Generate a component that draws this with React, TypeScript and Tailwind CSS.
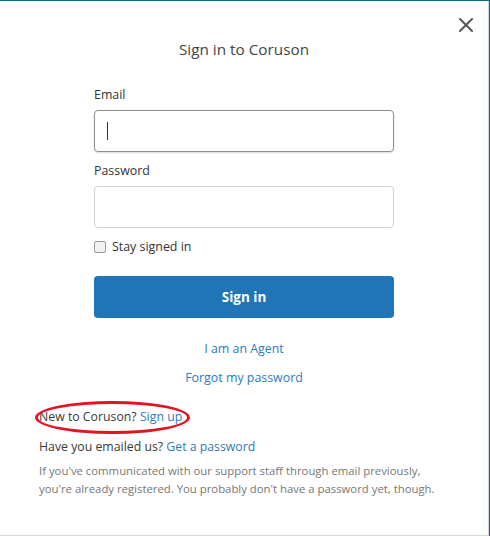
import { X } from 'lucide-react'

const font = { fontFamily: '"Open Sans", "Noto Sans", sans-serif' }

export default function App() {
  return (
    <div className="w-[490px] h-[536px] bg-[#0b6c86] pt-px pr-px" style={font}>
      <div className="relative h-full bg-white border-r border-b border-[#d6d6d6] flex flex-col">
        {/* Header */}
        <div className="relative flex justify-center pt-[36px] pb-[25px]">
          <h1 className="text-[15.3px] leading-[24px] text-[#444]">Sign in to Coruson</h1>
          <button className="absolute right-[10px] top-[12px] text-[#555]">
            <X size={24} strokeWidth={2} />
          </button>
        </div>

        {/* Form */}
        <div className="w-[300px] ml-[94px] flex flex-col">
          <label className="text-[12.4px] leading-[18px] text-[#333] mb-[6px]">Email</label>
          <div className="relative h-[42px] rounded-[4px] border border-[#8e8e8e] shadow-[0_1px_2px_rgba(0,0,0,0.15)]">
            <span className="absolute left-[12px] top-[11px] w-px h-[18px] bg-[#333]" />
          </div>

          <label className="text-[12.4px] leading-[18px] text-[#333] mt-[10px] mb-[6px]">Password</label>
          <div className="h-[42px] rounded-[4px] border border-[#d0d0d0]" />

          <label className="flex items-center gap-[6px] mt-[10px] text-[12.4px] leading-[18px] text-[#333]">
            <span className="w-[12px] h-[12px] rounded-[2px] border border-[#999] bg-[#f2f2f2]" />
            Stay signed in
          </label>

          <button className="mt-[20px] h-[42px] rounded-[4px] bg-[#2174b6] text-white text-[13.5px] font-bold">
            Sign in
          </button>

          <a className="mt-[22px] self-center text-[12.4px] leading-[18px] text-[#2d7bbd]">I am an Agent</a>
          <a className="mt-[11px] self-center text-[12.4px] leading-[18px] text-[#2d7bbd]">Forgot my password</a>
        </div>

        {/* Footer links */}
        <div className="relative ml-[39px] mt-[21px] flex flex-col">
          <p className="text-[12.3px] leading-[18px] text-[#3a3a3a]">
            New to Coruson? <a className="text-[#2d7bbd]">Sign up</a>
          </p>
          <span className="absolute left-[-4px] top-[-7px] w-[155px] h-[33px] rounded-[50%] border-[3px] border-[#e3141f]" />
          <p className="mt-[12px] text-[12.3px] leading-[18px] text-[#3a3a3a]">
            Have you emailed us? <a className="text-[#2d7bbd]">Get a password</a>
          </p>
          <p className="mt-[6px] text-[11.35px] leading-[18px] text-[#777]">
            If you've communicated with our support staff through email previously,
            <br />
            you're already registered. You probably don't have a password yet, though.
          </p>
        </div>
      </div>
    </div>
  )
}
